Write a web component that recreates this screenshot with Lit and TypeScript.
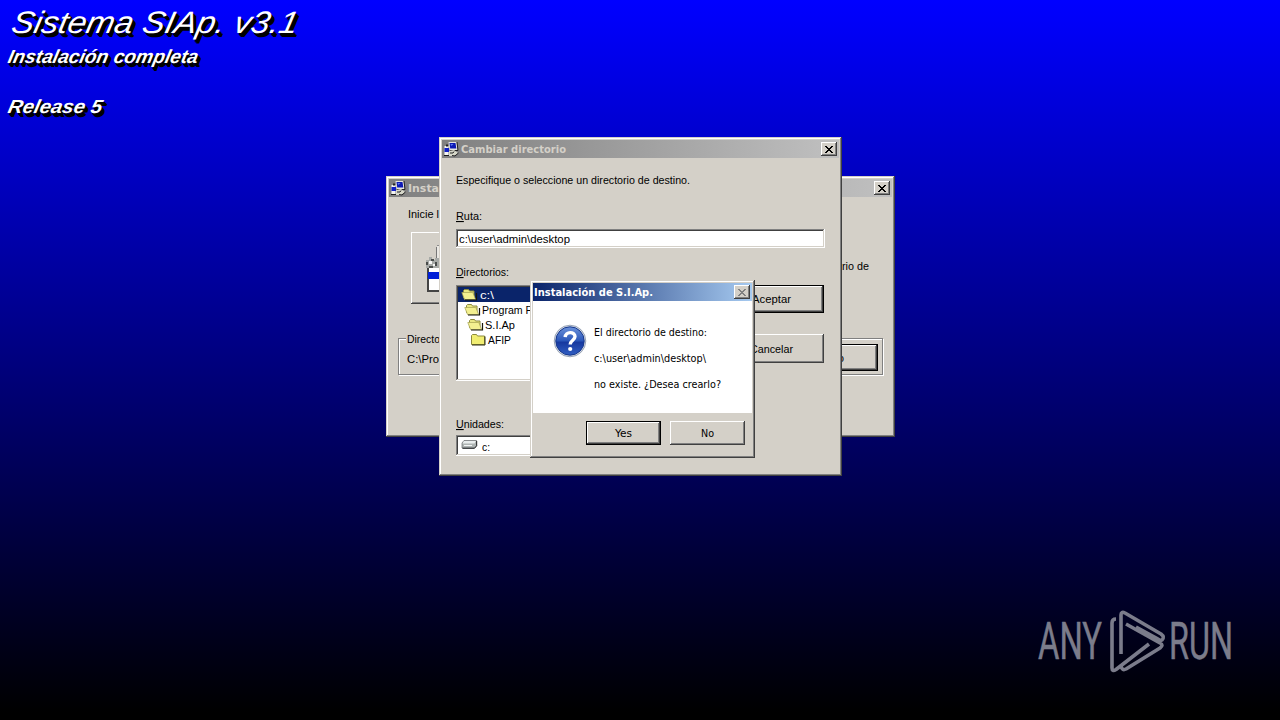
import { LitElement, html, css, svg, nothing } from "lit";
import { customElement, property } from "lit/decorators.js";

/* One line of text set to an exact advance width; `accel` underlines the first letter. */
@customElement("fit-text")
class FitText extends LitElement {
  @property() text = "";
  @property({ type: Number }) w = 50;
  @property({ type: Boolean }) accel = false;
  static styles = css`
    :host { display: block; height: 14px; flex: none; }
    svg { display: block; height: 100%; overflow: visible; }
    text { fill: currentColor; white-space: pre; }
    .u { text-decoration: underline; }
  `;
  render() {
    const head = this.accel ? this.text[0] : "";
    const tail = this.accel ? this.text.slice(1) : this.text;
    return html`<svg width=${this.w}><text x="0" y="11" textLength=${this.w} lengthAdjust="spacingAndGlyphs">${
      head ? svg`<tspan class="u">${head}</tspan>` : nothing
    }${tail}</text></svg>`;
  }
}

const closeGlyph = html`<svg width="8" height="7" viewBox="0 0 8 7" shape-rendering="crispEdges">
  <path d="M0 0h2v1h1v1h2v-1h1v-1h2v1h-1v1h-1v1h-1v1h1v1h1v1h1v1h-2v-1h-1v-1h-2v1h-1v1h-2v-1h1v-1h1v-1h1v-1h-1v-1h-1v-1h-1z" fill="currentColor"/></svg>`;

const setupIcon = html`<svg width="16" height="16" viewBox="0 0 16 16">
  <path d="M5.500 1h8l1 8h-8z" fill="#e4e4e0"/>
  <path d="M6.500 2h6l.8 5.500H7.200z" fill="#0c18b4"/><path d="M7.500 3h3l-2 2z" fill="#5878f0"/>
  <path d="M14 1l1 8.500H7" fill="none" stroke="#222"/>
  <path d="M1.500 5h4v9h-4z" fill="#f4f4f4"/><path d="M1.500 7h4.500v4H1.500z" fill="#1020c8"/>
  <path d="M3 3.500h2v2H3z" fill="#222"/>
  <path d="M6 10l5-1 4 3-4 3H6z" fill="#d7d8ca"/><path d="M7 12h3l1-1.500M9 14.500l3 .5 3.500-3" fill="none" stroke="#222"/>
  <path d="M1 14.500h5" stroke="#1b1b1b"/></svg>`;

const openFolder = html`<svg width="17" height="13" viewBox="0 0 17 13">
  <path d="M2.500 9.500V2.500l1-1h4l1 1.500h4.500v7z" fill="#e9e782" stroke="#8c8a3d"/>
  <path d="M.8 4.500h11l2.800 7H3.500z" fill="#f3f090" stroke="#a5a250" stroke-width=".7"/>
  <path d="M4 12h11.500V5" fill="none" stroke="#17170b" stroke-width="1.200"/></svg>`;

const closedFolder = html`<svg width="17" height="13" viewBox="0 0 17 13">
  <path d="M1.500 11.500v-9l1-1h4l1 1.500h7v8.500z" fill="#f1ee72" stroke="#8c8a3d"/>
  <path d="M2 12h13V3.500" fill="none" stroke="#333214"/></svg>`;

const driveIcon = html`<svg width="17" height="10" viewBox="0 0 17 10">
  <path d="M3 .5h12.500v5l-2 2.500H1V3z" fill="#aeb4b3" stroke="#66696c" stroke-width=".7"/>
  <path d="M3 1h12l-1.500 2.500H1.500z" fill="#e9eded"/><path d="M3 5.500h8" stroke="#f3f4f4"/>
  <path d="M1.500 8.300h12l2.200-2.500V1" fill="none" stroke="#242628"/></svg>`;

const toolIcon = html`<svg width="32" height="50" viewBox="0 0 32 50" shape-rendering="crispEdges">
  <path d="M12 1h10v17h-10z" fill="#e9e7e2"/><path d="M11 3h1v14h-1z" fill="#777"/><path d="M12 1h10v1h-10z" fill="#8d8d8d"/>
  <path d="M1 16h3v-3h3v3h3v-2h4v10h-13z" fill="#a7aaa7"/>
  <path d="M1 18h2v3h-2zM6 15h3v2h-3zM4 22h4v2h-4zM10 18h2v4h-2z" fill="#494c4b"/>
  <path d="M4 17h3v3h-3zM8 20h2v2h-2z" fill="#f5f5f5"/>
  <path d="M2 24h16v24h-16z" fill="#444"/><path d="M4 24h14v22h-14z" fill="#fff"/>
  <path d="M3 28h15v7h-15z" fill="#001fd7"/></svg>`;

const questionIcon = html`<svg width="34" height="34" viewBox="0 0 34 34">
  <defs><linearGradient id="q" x2="0" y2="1"><stop stop-color="#6c92da"/><stop offset=".48" stop-color="#2d59bb"/>
  <stop offset=".55" stop-color="#1739a0"/><stop offset="1" stop-color="#315fc3"/></linearGradient></defs>
  <circle cx="17" cy="17" r="15.800" fill="#d1d7e2" stroke="#8995ab" stroke-width=".8"/>
  <circle cx="17" cy="17" r="14.200" fill="url(#q)" stroke="#18398d"/>
  <path d="M12.200 13.200c.3-6 9.800-6 9.800-.6 0 3.700-4.800 3.700-4.800 8" fill="none" stroke="#fff" stroke-width="3.400"/>
  <circle cx="17.200" cy="25" r="2.100" fill="#fff"/></svg>`;

@customElement("win-frame")
class WinFrame extends LitElement {
  @property() heading = "";
  @property({ type: Number }) hw = 50;
  @property({ type: Boolean, reflect: true }) modal = false;
  static styles = css`
    :host {
      position: absolute; box-sizing: border-box; display: flex; flex-direction: column; padding: 3px;
      background: #d4d0c8; color: #000;
      box-shadow: inset -1px -1px #404040, inset 1px 1px #d4d0c8, inset -2px -2px #808080, inset 2px 2px #fff;
    }
    .bar {
      display: flex; align-items: center; height: 18px; flex: none; box-sizing: border-box; padding: 0 2px 0 1px;
      background: linear-gradient(90deg, #808080, #c0c0c0); color: #d4d0c8;
      font: bold 11px "DejaVu Sans", sans-serif;
    }
    :host([modal]) .bar { background: linear-gradient(90deg, #0a246a, #a6caf0); color: #fff; }
    .bar fit-text { margin-left: 2px; }
    :host([modal]) .bar fit-text { margin-left: 0; }
    .close {
      margin-left: auto; width: 16px; height: 14px; display: grid; place-items: center; background: #d4d0c8; color: #000;
      box-shadow: inset -1px -1px #404040, inset 1px 1px #fff, inset -2px -2px #808080;
    }
    :host([modal]) .close { color: #808080; }
  `;
  render() {
    return html`<div class="bar">${this.modal ? nothing : setupIcon}
      <fit-text .text=${this.heading} .w=${this.hw}></fit-text>
      <span class="close">${closeGlyph}</span></div><slot></slot>`;
  }
}

@customElement("app-root")
class AppRoot extends LitElement {
  static styles = css`
    :host {
      display: block; position: relative; width: 1280px; height: 720px; overflow: hidden;
      background: linear-gradient(#0000ff, #0000f8 3%, #000000 99%);
      font: 11px "Liberation Sans", Arial, sans-serif;
    }
    .banner { display: flex; flex-direction: column; padding: 22px 0 0 7px; color: #fff; font-style: italic; }
    .banner fit-text { transform: skewX(-12deg); transform-origin: 0 11px; text-shadow: 2px 2px #000, 3px 3px #000, 4px 4px #000; }
    .t1 { font-size: 31px; margin-left: 3px; -webkit-text-stroke: 1px #fff; }
    .t2 { font-size: 19px; margin-top: 16px; font-weight: bold; }
    .t3 { font-size: 19px; margin-top: 36px; font-weight: bold; }

    .back { left: 386px; top: 176px; width: 509px; height: 261px; }
    .mid { left: 439px; top: 137px; width: 403px; height: 339px; }
    .top { left: 530px; top: 280px; width: 225px; height: 178px; }

    .raised { box-shadow: inset -1px -1px #404040, inset 1px 1px #fff, inset -2px -2px #808080; background: #d4d0c8; }
    .default { box-shadow: inset 0 0 0 1px #000, inset -2px -2px #404040, inset 2px 2px #fff, inset -3px -3px #808080; }
    .sunken {
      background: #fff; box-sizing: border-box;
      box-shadow: inset -1px -1px #fff, inset 1px 1px #808080, inset -2px -2px #d4d0c8, inset 2px 2px #404040;
    }
    .btn { display: flex; align-items: center; justify-content: center; box-sizing: border-box; }

    .backbody { padding: 10px 9px 0 9px; display: flex; flex-direction: column; }
    .intro { margin-left: 10px; }
    .line { display: flex; justify-content: space-between; margin: 11px 14px 0 13px; }
    .tool { width: 80px; height: 72px; box-sizing: border-box; padding: 12px 0 0 14px; }
    .line fit-text { margin-top: 27px; }
    .group {
      margin-top: 34px; height: 37px; box-sizing: border-box; border: 1px solid #808080;
      box-shadow: inset 1px 1px #fff, 1px 1px #fff; display: flex; justify-content: space-between; padding: 0 4px 0 8px;
    }
    .legend { display: flex; flex-direction: column; gap: 6px; margin-top: -7px; }
    .legend .cap { background: #d4d0c8; padding: 0 2px 0 1px; margin-left: -1px; }
    .go { width: 74px; height: 27px; margin-top: 5px; justify-content: flex-end; padding-right: 34px; }

    .midbody { padding: 15px 14px 0; display: flex; flex-direction: column; }
    .ruta { margin-top: 22px; }
    .field { height: 19px; margin-top: 6px; padding: 3px 3px 0; }
    .cols { display: flex; justify-content: space-between; margin-top: 17px; }
    .left { width: 180px; }
    .list { height: 96px; margin-top: 6px; padding: 2px; }
    .row { display: flex; height: 15px; align-items: center; gap: 2px; }
    .lv0 { background: #0a246a; color: #fff; padding-left: 3px; }
    .lv0 fit-text { margin-top: 1px; }
    .lv1 { padding-left: 6px; gap: 1px; }
    .lv2 { padding-left: 9px; gap: 1px; }
    .lv3 { padding-left: 12px; gap: 1px; }
    .units { margin-top: 36px; }
    .drive { height: 21px; margin-top: 4px; padding: 0 5px 1px; display: flex; align-items: center; gap: 4px; }
    .drive fit-text { margin-top: 3px; }
    .right { display: flex; flex-direction: column; gap: 21px; padding-top: 20px; margin-right: 1px; }
    .right .btn { width: 105px; height: 28px; }
    .right .btn.plain { height: 29px; }

    .msg { height: 112px; background: #fff; display: flex; box-sizing: border-box; padding: 23px 0 0 20px; gap: 7px; flex: none; }
    .tahoma { font-family: "DejaVu Sans", sans-serif; font-size: 10.500px; }
    .lines { display: flex; flex-direction: column; gap: 12px; margin-top: 1px; }
    .actions { display: flex; justify-content: flex-end; gap: 9px; padding: 8px 7px 0 0; }
    .actions .btn { width: 75px; height: 24px; }

    .mark { position: absolute; left: 1039px; top: 608px; display: block; overflow: visible; }
    .mark text { font: 52px Roboto, sans-serif; fill: #7b7c8b; stroke: #7b7c8b; stroke-width: .5px; }
    .mark path { fill: none; stroke: #7b7c8b; stroke-width: 3.600; stroke-linejoin: round; stroke-linecap: butt; }
  `;
  line(text: string, w: number, cls = "", accel = false) {
    return html`<fit-text class=${cls} .text=${text} .w=${w} .accel=${accel}></fit-text>`;
  }
  render() {
    return html`
      <div class="banner">
        ${this.line("Sistema SIAp. v3.1", 286, "t1")}
        ${this.line("Instalación completa", 190, "t2")}
        ${this.line("Release 5", 94, "t3")}
      </div>

      <win-frame class="back" .heading=${"Insta"} .hw=${31}>
        <div class="backbody">
          ${this.line("Inicie l", 31, "intro")}
          <div class="line"><div class="tool raised">${toolIcon}</div>${this.line("rio de", 27)}</div>
          <div class="group">
            <div class="legend">${this.line("Directo", 33, "cap")}${this.line("C:\\Pro", 32)}</div>
            <div class="btn default go">${this.line("o", 6)}</div>
          </div>
        </div>
      </win-frame>

      <win-frame class="mid" .heading=${"Cambiar directorio"} .hw=${105}>
        <div class="midbody">
          ${this.line("Especifique o seleccione un directorio de destino.", 234)}
          ${this.line("Ruta:", 26, "ruta", true)}
          <div class="field sunken">${this.line("c:\\user\\admin\\desktop", 111)}</div>
          <div class="cols">
            <div class="left">
              ${this.line("Directorios:", 53, "", true)}
              <div class="list sunken">
                <div class="row lv0">${openFolder}${this.line("c:\\", 14)}</div>
                <div class="row lv1">${openFolder}${this.line("Program Files", 66)}</div>
                <div class="row lv2">${openFolder}${this.line("S.I.Ap", 30)}</div>
                <div class="row lv3">${closedFolder}${this.line("AFIP", 23)}</div>
              </div>
              ${this.line("Unidades:", 48, "units", true)}
              <div class="drive sunken">${driveIcon}${this.line("c:", 8)}</div>
            </div>
            <div class="right">
              <div class="btn default">${this.line("Aceptar", 39)}</div>
              <div class="btn raised plain">${this.line("Cancelar", 43)}</div>
            </div>
          </div>
        </div>
      </win-frame>

      <win-frame class="top" modal .heading=${"Instalación de S.I.Ap."} .hw=${119}>
        <div class="msg">
          ${questionIcon}
          <div class="lines tahoma">
            ${this.line("El directorio de destino:", 113)}
            ${this.line("c:\\user\\admin\\desktop\\", 112)}
            ${this.line("no existe. ¿Desea crearlo?", 127)}
          </div>
        </div>
        <div class="actions tahoma">
          <div class="btn default">${this.line("Yes", 17)}</div>
          <div class="btn raised">${this.line("No", 13)}</div>
        </div>
      </win-frame>

      <svg class="mark" width="192" height="64">
        <text x="-1" y="51" textLength="64" lengthAdjust="spacingAndGlyphs">ANY</text>
        <text x="130" y="51" textLength="64" lengthAdjust="spacingAndGlyphs">RUN</text>
        <path d="M77 11q-4 0-4 4v45q0 4 4 1.500L110 36M82 46V7q0-4 4-2l36 21q4 3 1 6q-2 1-4-1L97 19M82 58q1 5 5 3L121 40q4-3 0-5L87 16"/>
      </svg>`;
  }
}
